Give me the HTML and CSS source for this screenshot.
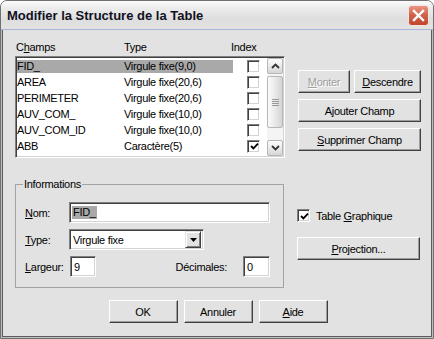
FILE: index.html
```html
<!DOCTYPE html>
<html lang="fr">
<head>
    <meta charset="UTF-8">
    <title>Modifier la Structure de la Table</title>
    <link rel="stylesheet" href="styles.css">
</head>
<body>
    <div class="window">
        <div class="titlebar">
            <span class="title">Modifier la Structure de la Table</span>
            <button class="close" aria-label="Fermer">
                <svg width="21" height="21" viewBox="0 0 21 21">
                    <defs>
                        <linearGradient id="red" x1="0" y1="0" x2="0" y2="1">
                            <stop offset="0" stop-color="#e99a88"/>
                            <stop offset="0.45" stop-color="#d4634c"/>
                            <stop offset="1" stop-color="#c0432c"/>
                        </linearGradient>
                    </defs>
                    <rect x="0.5" y="0.5" width="20" height="20" rx="3" fill="url(#red)" stroke="#f4e6e2"/>
                    <path d="M6 6 L15 15 M15 6 L6 15" stroke="#fff" stroke-width="2.4" stroke-linecap="square"/>
                </svg>
            </button>
        </div>

        <div class="frame">
            <div class="client">
                <div class="top">
                    <div class="fields">
                        <div class="cols">
                            <span class="col-name">C<u>h</u>amps</span>
                            <span class="col-type">Type</span>
                            <span>Index</span>
                        </div>
                        <div class="list">
                            <div class="rows">
                                <div class="row selected">
                                    <span class="cell"><span class="c-name">FID_</span><span class="c-type">Virgule fixe(9,0)</span></span>
                                    <span class="c-idx"><span class="check"></span></span>
                                </div>
                                <div class="row">
                                    <span class="cell"><span class="c-name">AREA</span><span class="c-type">Virgule fixe(20,6)</span></span>
                                    <span class="c-idx"><span class="check"></span></span>
                                </div>
                                <div class="row">
                                    <span class="cell"><span class="c-name">PERIMETER</span><span class="c-type">Virgule fixe(20,6)</span></span>
                                    <span class="c-idx"><span class="check"></span></span>
                                </div>
                                <div class="row">
                                    <span class="cell"><span class="c-name">AUV_COM_</span><span class="c-type">Virgule fixe(10,0)</span></span>
                                    <span class="c-idx"><span class="check"></span></span>
                                </div>
                                <div class="row">
                                    <span class="cell"><span class="c-name">AUV_COM_ID</span><span class="c-type">Virgule fixe(10,0)</span></span>
                                    <span class="c-idx"><span class="check"></span></span>
                                </div>
                                <div class="row">
                                    <span class="cell"><span class="c-name">ABB</span><span class="c-type">Caractère(5)</span></span>
                                    <span class="c-idx">
                                        <span class="check">
                                            <svg width="9" height="9" viewBox="0 0 9 9"><path d="M1 4 L3.4 6.4 L8 1.6" fill="none" stroke="#000" stroke-width="1.8"/></svg>
                                        </span>
                                    </span>
                                </div>
                            </div>
                            <div class="scrollbar">
                                <span class="sb-btn">
                                    <svg width="9" height="6" viewBox="0 0 9 6"><path d="M1 5 L4.5 1.5 L8 5" fill="none" stroke="#333" stroke-width="1.8"/></svg>
                                </span>
                                <span class="sb-thumb"><span class="grip"></span></span>
                                <span class="sb-track"></span>
                                <span class="sb-btn">
                                    <svg width="9" height="6" viewBox="0 0 9 6"><path d="M1 1 L4.5 4.5 L8 1" fill="none" stroke="#333" stroke-width="1.8"/></svg>
                                </span>
                            </div>
                        </div>
                    </div>

                    <div class="actions">
                        <div class="btn-pair">
                            <button class="btn btn-up" disabled><u>M</u>onter</button>
                            <button class="btn btn-down"><u>D</u>escendre</button>
                        </div>
                        <button class="btn">Ajouter Champ</button>
                        <button class="btn"><u>S</u>upprimer Champ</button>
                    </div>
                </div>

                <div class="mid">
                    <fieldset class="group">
                        <legend>Informations</legend>
                        <div class="frow">
                            <span class="lbl"><u>N</u>om:</span>
                            <span class="field field-name"><span class="sel-text">FID_</span></span>
                        </div>
                        <div class="frow">
                            <span class="lbl"><u>T</u>ype:</span>
                            <span class="field combo">
                                <span class="combo-text">Virgule fixe</span>
                                <span class="combo-btn">
                                    <svg width="7" height="4" viewBox="0 0 7 4"><path d="M0 0 H7 L3.5 4 Z" fill="#000"/></svg>
                                </span>
                            </span>
                        </div>
                        <div class="frow">
                            <span class="lbl lbl-wide"><u>L</u>argeur:</span>
                            <span class="field field-num">9</span>
                            <span class="dec">
                                <span>Décimales:</span>
                                <span class="field field-dec">0</span>
                            </span>
                        </div>
                    </fieldset>

                    <div class="side">
                        <div class="tick">
                            <span class="check">
                                <svg width="9" height="9" viewBox="0 0 9 9"><path d="M1 4 L3.4 6.4 L8 1.6" fill="none" stroke="#000" stroke-width="1.8"/></svg>
                            </span>
                            <span>Table <u>G</u>raphique</span>
                        </div>
                        <button class="btn"><u>P</u>rojection...</button>
                    </div>
                </div>

                <div class="footer">
                    <button class="btn btn-foot">OK</button>
                    <button class="btn btn-foot">Annuler</button>
                    <button class="btn btn-foot"><u>A</u>ide</button>
                </div>
            </div>
        </div>
    </div>
</body>
</html>
```

FILE: styles.css
```css
:root {
    --face: #e2e2e2;
    --shadow: #9d9d9d;
    --dark: #404040;
    --select: #a9a9a9;
}

* {
    box-sizing: border-box;
}

body {
    margin: 0;
    background: #fff;
    font-family: "Liberation Sans", Arial, sans-serif;
    font-size: 11px;
    letter-spacing: -0.3px;
    color: #000;
}

/* window frame */
.window {
    width: 434px;
    height: 339px;
    border: 1px solid #707070;
    border-radius: 7px 7px 0 0;
    overflow: hidden;
    display: flex;
    flex-direction: column;
    background: var(--face);
}

.titlebar {
    height: 29px;
    flex: none;
    display: flex;
    align-items: center;
    justify-content: space-between;
    padding: 0 4px 0 6px;
    background: linear-gradient(#fbfbfb, #ececec 25%, #dedede 65%, #e3e3e3);
    border-bottom: 1px solid #a9b5d9;
}

.title {
    font-size: 13px;
    font-weight: bold;
    letter-spacing: 0;
    color: #111122;
}

.close {
    width: 21px;
    height: 21px;
    padding: 0;
    border: 0;
    background: none;
    display: block;
}

.close svg {
    display: block;
}

.frame {
    flex: 1;
    display: flex;
    padding: 0 1px 1px;
    background: #bdbdbd;
}

.client {
    flex: 1;
    border: 1px solid #5c5c5c;
    border-top: 0;
    background: var(--face);
    padding: 11px 10px 0 12px;
}

/* field list */
.top {
    display: flex;
}

.fields {
    width: 270px;
}

.cols {
    display: flex;
    height: 13px;
    line-height: 13px;
    padding-left: 1px;
}

.col-name {
    width: 108px;
}

.col-type {
    width: 107px;
}

.list {
    display: flex;
    height: 102px;
    margin-top: 2px;
    background: #fff;
    border: 1px solid;
    border-color: #808080 #fff #fff #808080;
    box-shadow: inset 1px 1px var(--dark), inset -1px -1px #d4d4d4;
    padding: 1px;
}

.rows {
    flex: 1;
}

.row {
    display: flex;
    align-items: center;
    height: 16px;
}

.cell {
    display: flex;
    align-items: center;
    width: 216px;
    height: 13px;
}

.selected .cell {
    background: var(--select);
}

.c-name {
    width: 107px;
}

.c-idx {
    display: flex;
    padding-left: 14px;
}

.check {
    display: flex;
    align-items: center;
    justify-content: center;
    width: 13px;
    height: 13px;
    background: #fff;
    border: 1px solid;
    border-color: #808080 #fff #fff #808080;
    box-shadow: inset 1px 1px var(--dark), inset -1px -1px #d4d4d4;
}

.check svg {
    margin: 1px 0 0 1px;
}

.scrollbar {
    width: 16px;
    display: flex;
    flex-direction: column;
    background: #f4f4f4;
}

.sb-btn {
    height: 16px;
    display: flex;
    align-items: center;
    justify-content: center;
    border: 1px solid #b7b7b7;
    border-radius: 2px;
    background: linear-gradient(#fdfdfd, #e6e6e6 60%, #d6d6d6);
}

.sb-thumb {
    height: 52px;
    margin-top: 2px;
    display: flex;
    align-items: center;
    justify-content: center;
    border: 1px solid #b7b7b7;
    border-radius: 2px;
    background: linear-gradient(90deg, #fafafa, #e9e9e9 50%, #d4d4d4);
}

.grip {
    width: 7px;
    height: 7px;
    background: repeating-linear-gradient(#9a9a9a 0 1px, transparent 1px 2px);
}

.sb-track {
    flex: 1;
}

/* buttons */
.btn {
    height: 23px;
    padding: 0;
    font: inherit;
    letter-spacing: inherit;
    color: #000;
    background: var(--face);
    border: 1px solid;
    border-color: #fff var(--dark) var(--dark) #fff;
    box-shadow: inset -1px -1px var(--shadow);
}

.btn:disabled {
    color: #a0a0a0;
    text-shadow: 1px 1px #fff;
}

.actions {
    width: 123px;
    margin-left: 13px;
    padding-top: 29px;
    display: flex;
    flex-direction: column;
    gap: 6px;
}

.btn-pair {
    display: flex;
    gap: 4px;
}

.btn-up {
    width: 52px;
}

.btn-down {
    width: 67px;
}

/* informations */
.mid {
    display: flex;
    margin-top: 20px;
}

.group {
    width: 269px;
    margin: 0;
    padding: 11px 13px 10px 9px;
    border: 1px solid #a3a3a3;
}

.group legend {
    padding: 0 1px;
    margin-left: -2px;
    line-height: 13px;
}

.frow {
    display: flex;
    align-items: center;
    height: 21px;
}

.frow + .frow {
    margin-top: 6px;
}

.lbl {
    width: 44px;
}

.lbl-wide {
    width: 45px;
}

.field {
    height: 21px;
    display: flex;
    align-items: center;
    padding-left: 3px;
    background: #fff;
    border: 1px solid;
    border-color: #808080 #fff #fff #808080;
    box-shadow: inset 1px 1px var(--dark), inset -1px -1px #d4d4d4;
}

.field-name {
    flex: 1;
    padding-left: 2px;
}

.sel-text {
    background: var(--select);
    padding: 0 1px;
    line-height: 13px;
}

.combo {
    width: 135px;
    justify-content: space-between;
    padding-right: 2px;
}

.combo-btn {
    width: 16px;
    height: 17px;
    display: flex;
    align-items: center;
    justify-content: center;
    background: var(--face);
    border: 1px solid;
    border-color: #e2e2e2 var(--dark) var(--dark) #e2e2e2;
    box-shadow: inset 1px 1px #fff, inset -1px -1px #808080;
}

.field-num {
    width: 26px;
}

.field-dec {
    width: 27px;
}

.dec {
    display: flex;
    align-items: center;
    gap: 16px;
    margin-left: auto;
}

.side {
    width: 123px;
    margin-left: 13px;
    padding-top: 31px;
    display: flex;
    flex-direction: column;
}

.side .btn {
    margin-top: 15px;
}

.tick {
    display: flex;
    align-items: center;
    gap: 6px;
    height: 13px;
}

/* bottom row */
.footer {
    display: flex;
    justify-content: center;
    gap: 6px;
    margin-top: 12px;
}

.btn-foot {
    width: 69px;
}
```
